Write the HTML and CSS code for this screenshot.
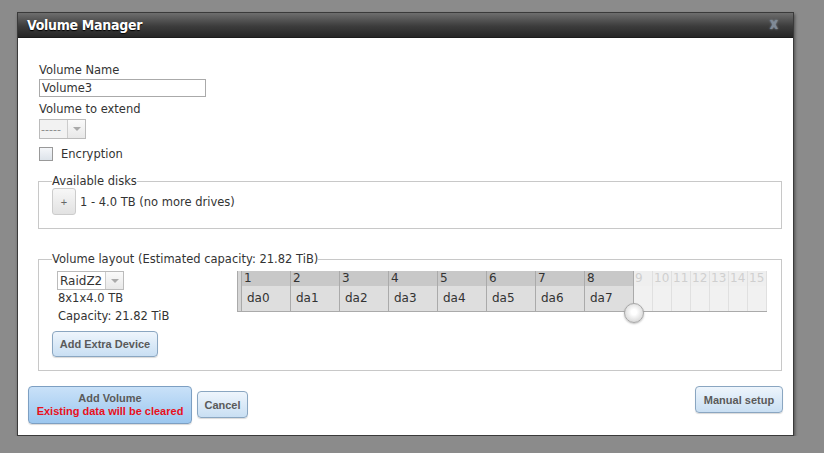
FILE: index.html
```
<!DOCTYPE html>
<html lang="en">
<head>
    <meta charset="UTF-8">
    <title>Volume Manager</title>
    <link rel="stylesheet" href="styles.css">
</head>
<body>
    <div class="dialog">
        <div class="titlebar">
            <span class="title">Volume Manager</span>
            <span class="close">X</span>
        </div>

        <div class="content">
            <div class="field-label">Volume Name</div>
            <input class="text-input" type="text" value="Volume3">

            <div class="field-label gap">Volume to extend</div>
            <div class="select disabled">
                <span class="select-value">-----</span>
                <span class="select-arrow"></span>
            </div>

            <label class="check-row">
                <span class="checkbox"></span>
                Encryption
            </label>

            <!-- available disks -->
            <fieldset class="group group-disks">
                <legend>Available disks</legend>
                <div class="disk-row">
                    <button class="btn-plus">+</button>
                    <span>1 - 4.0 TB (no more drives)</span>
                </div>
            </fieldset>

            <!-- layout -->
            <fieldset class="group group-layout">
                <legend>Volume layout (Estimated capacity: 21.82 TiB)</legend>
                <div class="layout">
                    <div class="layout-left">
                        <div class="select raid">
                            <span class="select-value">RaidZ2</span>
                            <span class="select-arrow"></span>
                        </div>
                        <div class="info">8x1x4.0 TB</div>
                        <div class="info second">Capacity: 21.82 TiB</div>
                        <button class="btn btn-extra">Add Extra Device</button>
                    </div>

                    <div class="disk-grid">
                        <div class="grid-handle"></div>
                        <div class="col"><div class="col-head">1</div><div class="col-body">da0</div></div>
                        <div class="col"><div class="col-head">2</div><div class="col-body">da1</div></div>
                        <div class="col"><div class="col-head">3</div><div class="col-body">da2</div></div>
                        <div class="col"><div class="col-head">4</div><div class="col-body">da3</div></div>
                        <div class="col"><div class="col-head">5</div><div class="col-body">da4</div></div>
                        <div class="col"><div class="col-head">6</div><div class="col-body">da5</div></div>
                        <div class="col"><div class="col-head">7</div><div class="col-body">da6</div></div>
                        <div class="col"><div class="col-head">8</div><div class="col-body">da7</div></div>
                        <div class="col off"><div class="col-head">9</div><div class="col-body"></div></div>
                        <div class="col off"><div class="col-head">10</div><div class="col-body"></div></div>
                        <div class="col off"><div class="col-head">11</div><div class="col-body"></div></div>
                        <div class="col off"><div class="col-head">12</div><div class="col-body"></div></div>
                        <div class="col off"><div class="col-head">13</div><div class="col-body"></div></div>
                        <div class="col off"><div class="col-head">14</div><div class="col-body"></div></div>
                        <div class="col off"><div class="col-head">15</div><div class="col-body"></div></div>
                        <div class="knob"></div>
                    </div>
                </div>
            </fieldset>
        </div>

        <div class="actions">
            <button class="btn btn-add">
                Add Volume<br>
                <span class="warn">Existing data will be cleared</span>
            </button>
            <button class="btn btn-cancel">Cancel</button>
            <button class="btn btn-manual">Manual setup</button>
        </div>
    </div>
</body>
</html>
```

FILE: styles.css
```
* {
    box-sizing: border-box;
}

body {
    margin: 0;
    background-color: #8b8b8b;
    font-family: 'DejaVu Sans', Verdana, sans-serif;
    font-size: 11.5px;
    color: #333;
}

.dialog {
    margin: 12px 0 0 17px;
    width: 777px;
    height: 424px;
    background-color: #fff;
    border: 1px solid #3a3a3a;
    box-shadow: 1px 2px 3px rgba(0,0,0,0.45);
}

.titlebar {
    height: 25px;
    display: flex;
    align-items: center;
    justify-content: space-between;
    padding: 0 15px 0 9px;
    background: linear-gradient(#6e6e6e, #3c3c3c 55%, #262626);
    border-bottom: 1px solid #1c1c1c;
}

.title {
    font-family: 'DejaVu Sans Condensed', 'DejaVu Sans', sans-serif;
    font-weight: bold;
    font-size: 14px;
    letter-spacing: -0.3px;
    color: #fff;
    text-shadow: 0 1px 1px #000;
}

.close {
    font-family: 'DejaVu Sans Condensed', sans-serif;
    font-weight: bold;
    font-size: 12px;
    color: #7f8a96;
    text-shadow: 0 0 2px #9fb0c4;
}

.content {
    padding: 24px 11px 0 21px;
}

.field-label {
    line-height: 16px;
}

.field-label.gap {
    margin-top: 4px;
}

.text-input {
    display: block;
    margin-top: 1px;
    width: 167px;
    height: 18px;
    padding: 0 2px;
    border: 1px solid #aaa;
    font-family: inherit;
    font-size: 11.5px;
    color: #333;
    outline: none;
}

.select {
    display: flex;
    align-items: stretch;
    height: 20px;
    border: 1px solid #bbb;
    background-color: #fff;
    width: fit-content;
}

.select-value {
    display: flex;
    align-items: center;
    padding: 0 3px;
}

.select-arrow {
    width: 18px;
    border-left: 1px solid #ccc;
    background: linear-gradient(#fafafa, #e8e8e8);
    position: relative;
}

.select-arrow::after {
    content: '';
    position: absolute;
    left: 5px;
    top: 7px;
    border-left: 4px solid transparent;
    border-right: 4px solid transparent;
    border-top: 4px solid #aaa;
}

.select.disabled {
    margin-top: 2px;
    width: 47px;
    background-color: #f2f2f2;
    color: #888;
}

.select.disabled .select-value {
    flex: 1;
    padding: 0 1px;
    font-size: 11px;
}

.check-row {
    display: flex;
    align-items: center;
    gap: 8px;
    height: 18px;
    margin-top: 6px;
}

.checkbox {
    width: 14px;
    height: 14px;
    border: 1px solid #999;
    background: linear-gradient(#f4f6f9, #dde3ea);
}

.group {
    margin: 11px 0 0 -1px;
    padding: 0 12px 0 13px;
    border: 1px solid #c8c8c8;
    min-width: 0;
}

.group legend {
    padding: 0;
    line-height: 14px;
}

.group-disks {
    padding-bottom: 13px;
}

.disk-row {
    display: flex;
    align-items: center;
    gap: 4px;
}

.btn-plus {
    width: 24px;
    height: 27px;
    border: 1px solid #ccc;
    border-radius: 3px;
    background: linear-gradient(#f7f7f7, #e2e2e2);
    color: #666;
    font-size: 11px;
    padding: 0;
}

.group-layout {
    margin-top: 23px;
    padding-top: 5px;
    padding-bottom: 13px;
}

.layout {
    display: flex;
    align-items: flex-start;
}

.layout-left {
    width: 185px;
}

.select.raid {
    margin-left: 5px;
    height: 19px;
}

.select.raid .select-value {
    font-size: 12px;
    padding: 0 3px 0 2px;
}

.info {
    margin-left: 6px;
    line-height: 16px;
}

.info.second {
    margin-top: 2px;
}

.btn {
    font-family: 'Liberation Sans', Arial, sans-serif;
    font-size: 11px;
    font-weight: bold;
    color: #5a5a5a;
    border: 1px solid #8aa6c1;
    border-radius: 4px;
    background: linear-gradient(#eef5fc, #c9dff3);
    box-shadow: 0 1px 1px rgba(0,0,0,0.15);
    cursor: pointer;
}

.btn-extra {
    margin-top: 7px;
    width: 106px;
    height: 26px;
    padding: 0;
}

.disk-grid {
    position: relative;
    display: flex;
    border-bottom: 1px solid #aaa;
}

.grid-handle {
    width: 5px;
    background-color: #d6d6d6;
    border-left: 1px solid #aaa;
    border-right: 1px solid #aaa;
}

.col {
    width: 49px;
    border-right: 1px solid #aaa;
}

.col-head {
    height: 15px;
    line-height: 15px;
    padding-left: 2px;
    background-color: #c8c8c8;
    font-size: 12px;
    color: #333;
}

.col-body {
    height: 25px;
    line-height: 25px;
    padding-left: 5px;
    background-color: #dedede;
    font-size: 12px;
}

.col.off {
    width: 19px;
    border-right-color: #e0e0e0;
}

.col.off .col-head {
    background-color: #efefef;
    color: #cfcfcf;
    padding-left: 1px;
}

.col.off .col-body {
    background-color: #f1f1f1;
}

.knob {
    position: absolute;
    left: 387px;
    top: 32px;
    width: 20px;
    height: 20px;
    border-radius: 50%;
    border: 1px solid #a8a8a8;
    background: radial-gradient(circle at 50% 45%, #fff 20%, #d9d9d9 75%, #bdbdbd);
    box-shadow: 0 1px 2px rgba(0,0,0,0.25);
}

.actions {
    display: flex;
    align-items: flex-start;
    margin-top: 15px;
    padding: 0 10px;
}

.btn-add {
    width: 164px;
    height: 38px;
    padding: 0;
    line-height: 13px;
    border-color: #7d9fc2;
    background: linear-gradient(#c9e1f8, #9cc7ef);
}

.warn {
    color: #e8101c;
}

.btn-cancel {
    margin: 5px 0 0 5px;
    width: 51px;
    height: 27px;
    padding: 0;
}

.btn-manual {
    margin-left: auto;
    width: 88px;
    height: 27px;
    padding: 0;
}
```
